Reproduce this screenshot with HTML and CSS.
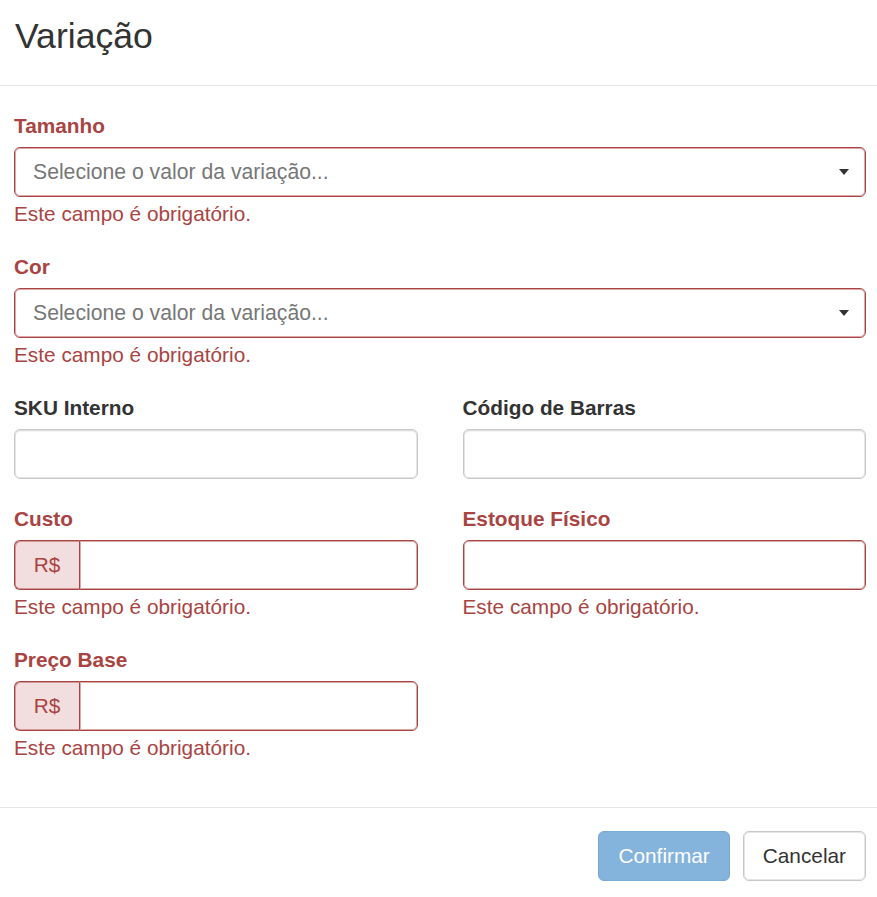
FILE: index.html
```html
<!DOCTYPE html>
<html lang="pt-BR">
<head>
    <meta charset="UTF-8">
    <meta name="viewport" content="width=device-width, initial-scale=1.0">
    <title>Variação</title>
    <link rel="stylesheet" href="styles.css">
</head>
<body>
    <div class="modal">
        <div class="modal-header">
            <h3 class="modal-title">Variação</h3>
        </div>

        <form class="modal-body">
            <div class="form-group has-error">
                <label>Tamanho</label>
                <span class="select">
                    <span class="select-text">Selecione o valor da variação...</span>
                    <span class="caret"></span>
                </span>
                <span class="help-block">Este campo é obrigatório.</span>
            </div>

            <div class="form-group has-error">
                <label>Cor</label>
                <span class="select">
                    <span class="select-text">Selecione o valor da variação...</span>
                    <span class="caret"></span>
                </span>
                <span class="help-block">Este campo é obrigatório.</span>
            </div>

            <div class="row">
                <div class="form-group">
                    <label>SKU Interno</label>
                    <input type="text" class="form-control">
                </div>
                <div class="form-group">
                    <label>Código de Barras</label>
                    <input type="text" class="form-control">
                </div>
            </div>

            <div class="row">
                <div class="form-group has-error">
                    <label>Custo</label>
                    <div class="input-group">
                        <span class="input-group-addon">R$</span>
                        <input type="text" class="form-control">
                    </div>
                    <span class="help-block">Este campo é obrigatório.</span>
                </div>
                <div class="form-group has-error">
                    <label>Estoque Físico</label>
                    <input type="text" class="form-control">
                    <span class="help-block">Este campo é obrigatório.</span>
                </div>
            </div>

            <div class="row">
                <div class="form-group has-error">
                    <label>Preço Base</label>
                    <div class="input-group">
                        <span class="input-group-addon">R$</span>
                        <input type="text" class="form-control">
                    </div>
                    <span class="help-block">Este campo é obrigatório.</span>
                </div>
            </div>
        </form>

        <div class="modal-footer">
            <button type="button" class="btn btn-primary" disabled>Confirmar</button>
            <button type="button" class="btn btn-default">Cancelar</button>
        </div>
    </div>
</body>
</html>
```

FILE: styles.css
```css
* {
    margin: 0;
    padding: 0;
    box-sizing: border-box;
}
body {
    font-family: "Liberation Sans", Arial, sans-serif;
    font-size: 20.8px;
    line-height: 29px;
    color: #333;
    background: #fff;
}
.modal {
    width: 877px;
}
.modal-header {
    height: 86px;
    padding: 17px 15px 0;
    border-bottom: 1px solid #e5e5e5;
}
.modal-title {
    font-size: 35.6px;
    font-weight: normal;
    line-height: 38px;
    color: #333;
}
.modal-body {
    padding: 25px 11px 21px 14px;
    border-bottom: 1px solid #e5e5e5;
}
.row {
    display: grid;
    grid-template-columns: 1fr 1fr;
    column-gap: 45px;
}
.form-group {
    margin-bottom: 25px;
}
label {
    display: block;
    font-weight: bold;
    margin-bottom: 7px;
    color: #333;
}
.form-control,
.select {
    display: block;
    width: 100%;
    height: 50px;
    padding: 0 18px;
    font-family: inherit;
    font-size: 20.8px;
    color: #555;
    background: #fff;
    border: 1px solid #c8c8c8;
    border-radius: 6px;
    box-shadow: inset 0 0 0 1px rgba(204, 204, 204, .5), inset 0 2px 1px rgba(0, 0, 0, .05);
    outline: none;
}
.select {
    position: relative;
    line-height: 48px;
}
.select-text {
    font-size: 21.2px;
    color: #777;
}
.caret {
    position: absolute;
    right: 16px;
    top: 21px;
    width: 0;
    height: 0;
    border-top: 6px solid #333;
    border-left: 5px solid transparent;
    border-right: 5px solid transparent;
}
.input-group {
    display: flex;
}
.input-group-addon {
    width: 65px;
    height: 50px;
    flex: none;
    text-align: center;
    line-height: 48px;
    border: 1px solid #ccc;
    border-right: none;
    border-radius: 6px 0 0 6px;
}
.input-group .form-control {
    border-radius: 0 6px 6px 0;
}
.help-block {
    display: block;
    margin-top: 3px;
    line-height: 27px;
}
.has-error label,
.has-error .help-block {
    color: #a94442;
}
.has-error .form-control,
.has-error .select {
    border-color: #a94442;
    box-shadow: inset 0 0 0 1px rgba(169, 68, 66, .45);
}
.has-error .input-group-addon {
    color: #a94442;
    background: #f2dede;
    border-color: #a94442;
    box-shadow: inset 1px 1px 0 rgba(169, 68, 66, .45), inset 0 -1px 0 rgba(169, 68, 66, .45);
}
.modal-footer {
    display: flex;
    justify-content: flex-end;
    gap: 13px;
    padding: 23px 11px 16px;
}
.btn {
    height: 50px;
    padding: 0 19px;
    font-family: inherit;
    font-size: 20.8px;
    border: 1px solid transparent;
    border-radius: 6px;
    cursor: pointer;
}
.btn-primary {
    color: #fff;
    background: #84b3dc;
    border-color: #7aaad6;
}
.btn-primary:disabled {
    cursor: not-allowed;
}
.btn-default {
    color: #333;
    background: #fff;
    border-color: #c8c8c8;
    box-shadow: inset 0 0 0 1px rgba(204, 204, 204, .5);
}
```
